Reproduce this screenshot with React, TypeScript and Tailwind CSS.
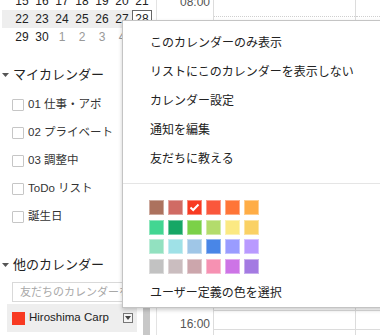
import React from 'react';

const weeks = [
  ['15', '16', '17', '18', '19', '20', '21'],
  ['22', '23', '24', '25', '26', '27', '28'],
  ['29', '30', '1', '2', '3', '4', '5'],
];

const myCalendars = ['01 仕事・アポ', '02 プライベート', '03 調整中', 'ToDo リスト', '誕生日'];

const menuItems = [
  'このカレンダーのみ表示',
  'リストにこのカレンダーを表示しない',
  'カレンダー設定',
  '通知を編集',
  '友だちに教える',
];

// classic palette, row by row
const swatches = [
  ['bg-[#ac725e]', 'bg-[#d06b64]', 'bg-[#f83a22]', 'bg-[#fa573c]', 'bg-[#ff7537]', 'bg-[#ffad46]'],
  ['bg-[#42d692]', 'bg-[#16a765]', 'bg-[#7bd148]', 'bg-[#b3dc6c]', 'bg-[#fbe983]', 'bg-[#fad165]'],
  ['bg-[#92e1c0]', 'bg-[#9fe1e7]', 'bg-[#9fc6e7]', 'bg-[#4986e7]', 'bg-[#9a9cff]', 'bg-[#b99aff]'],
  ['bg-[#c2c2c2]', 'bg-[#cabdbf]', 'bg-[#cca6ac]', 'bg-[#f691b2]', 'bg-[#cd74e6]', 'bg-[#a47ae2]'],
];

const Caret = () => (
  <svg width="7" height="4" viewBox="0 0 7 4" className="shrink-0">
    <polygon points="0,0 7,0 3.5,4" fill="#555" />
  </svg>
);

const MiniCalendar = () => (
  <div className="-mt-[8px] ml-[2px] w-[150px] flex flex-col text-[12px]">
    {weeks.map((week, wi) => (
      <div
        key={wi}
        className={`flex h-[18px] pl-[10px] ${wi === 1 ? 'bg-[#eeeeee]' : ''}`}
      >
        {week.map((d, di) => {
          const nextMonth = wi === 2 && di > 1;
          const today = wi === 1 && di === 6;
          return (
            <div
              key={di}
              className={`w-[20px] h-[18px] flex items-center justify-center leading-none ${
                nextMonth ? 'text-[#999]' : 'text-[#222]'
              } ${today ? 'border border-[#666] bg-white' : ''}`}
            >
              {d}
            </div>
          );
        })}
      </div>
    ))}
  </div>
);

const Sidebar = () => (
  <aside className="flex w-[157px] shrink-0 border-r border-[#e3e3e3]">
    <div className="w-[143px] shrink-0 flex flex-col">
      <MiniCalendar />

      <div className="mt-[19px] h-[20px] flex items-center pl-[2px] gap-[4px] text-[13px] text-[#222]">
        <Caret />
        <span>マイカレンダー</span>
      </div>

      <div className="mt-[6px] flex flex-col">
        {myCalendars.map((c) => (
          <div key={c} className="h-[28px] flex items-center pl-[12px] gap-[4px]">
            <div className="w-[12px] h-[12px] border border-[#c6c6c6] rounded-[1px] bg-white shrink-0" />
            <span className="text-[11.5px] text-[#333] whitespace-nowrap">{c}</span>
          </div>
        ))}
      </div>

      <div className="mt-[24px] h-[20px] flex items-center pl-[2px] gap-[4px] text-[13px] text-[#222]">
        <Caret />
        <span>他のカレンダー</span>
      </div>

      <input
        type="text"
        placeholder="友だちのカレンダーを追加"
        className="mt-[7px] ml-[12px] w-[150px] h-[20px] border border-[#d9d9d9] pl-[7px] text-[11px] outline-none placeholder:text-[#a8a8a8]"
      />

      <div className="mt-[2px] ml-[7px] w-[130px] h-[28px] bg-[#eeeeee] flex items-center pl-[5px] pr-[4px]">
        <div className="w-[13px] h-[13px] bg-[#f83a22] shrink-0" />
        <span className="ml-[4px] text-[11.5px] text-[#222] whitespace-nowrap">Hiroshima Carp</span>
        <div className="ml-auto w-[10px] h-[10px] border border-[#777] bg-[#f4f4f4] flex items-center justify-center">
          <svg width="6" height="4" viewBox="0 0 6 4">
            <polygon points="0,0 6,0 3,4" fill="#444" />
          </svg>
        </div>
      </div>
    </div>

    <div className="w-[7px] shrink-0 flex flex-col justify-end">
      <div className="h-[40px] bg-[#c8c8c8]" />
    </div>
  </aside>
);

const DayColumn = ({ className }: { className: string }) => (
  <div className={`flex flex-col ${className}`}>
    <div className="h-[17px] border-b border-dotted border-[#cfcfcf]" />
    <div className="flex-1" />
    <div className="h-[20px] border-t border-[#dcdcdc] border-b border-b-dotted" />
    <div className="h-[5px]" />
  </div>
);

const TimeGrid = () => (
  <section className="flex-1 flex">
    <div className="w-[56px] shrink-0 flex flex-col items-end pr-[3px] text-[12px] text-[#555]">
      <div className="h-[17px]">
        <div className="-mt-[4px] leading-[12px]">08:00</div>
      </div>
      <div className="flex-1" />
      <div className="h-[25px] pt-[8px] leading-[12px]">16:00</div>
    </div>
    <DayColumn className="w-[143px] shrink-0 border-l border-r border-[#dcdcdc]" />
    <DayColumn className="flex-1" />
  </section>
);

const CalendarMenu = () => (
  <div className="absolute left-[122px] top-[20px] w-[275px] h-[288px] bg-white border border-[#c4c4c4] shadow-[0_2px_4px_rgba(0,0,0,0.2)] flex flex-col">
    <div className="pt-[7px] flex flex-col">
      {menuItems.map((m) => (
        <div key={m} className="h-[29px] flex items-center pl-[27px] text-[12px] text-[#222] whitespace-nowrap">
          {m}
        </div>
      ))}
    </div>

    <div className="mt-[10px] border-t border-[#e5e5e5]" />

    <div className="pt-[16px] pl-[26px] flex flex-col gap-y-[4.5px]">
      {swatches.map((row, ri) => (
        <div key={ri} className="flex gap-x-[4px]">
          {row.map((cls, ci) => (
            <div
              key={cls}
              className={`w-[15px] h-[15px] ${cls} border border-white/40 flex items-center justify-center`}
            >
              {ri === 0 && ci === 2 && (
                <svg width="11" height="9" viewBox="0 0 11 9">
                  <path d="M1.5 4.5 L4.2 7 L9.5 1.5" fill="none" stroke="#fff" strokeWidth="2" />
                </svg>
              )}
            </div>
          ))}
        </div>
      ))}
    </div>

    <div className="mt-[11px] h-[17px] flex items-center pl-[27px] text-[12px] text-[#222]">
      ユーザー定義の色を選択
    </div>
  </div>
);

const App = () => {
  return (
    <div className="relative flex w-[380px] h-[335px] overflow-hidden bg-white font-['Liberation_Sans','Noto_Sans_CJK_JP',sans-serif]">
      <Sidebar />
      <TimeGrid />
      <CalendarMenu />
    </div>
  );
};

export default App;
